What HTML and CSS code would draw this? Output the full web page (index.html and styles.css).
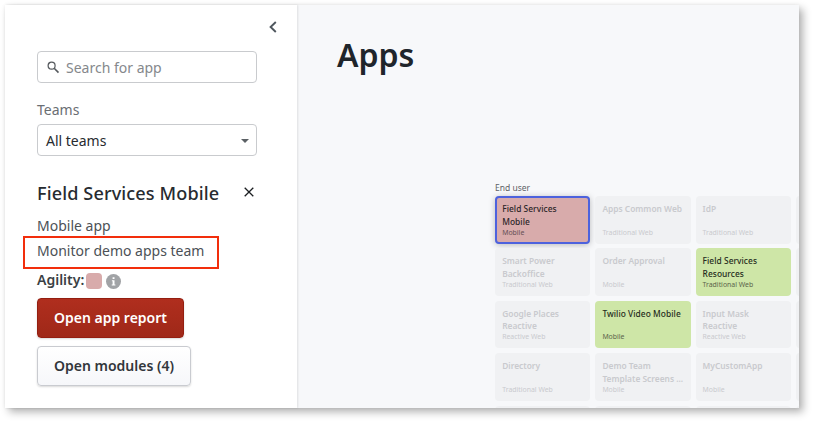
FILE: index.html
```html
<!DOCTYPE html>
<html lang="en">
<head>
<meta charset="utf-8">
<title>Apps</title>
<link rel="stylesheet" href="styles.css">
</head>
<body>
<div class="window">
  <aside class="sidebar">
    <div class="collapse"><svg width="8" height="12" viewBox="0 0 8 12"><path d="M6.8 1 1.6 6l5.2 5" fill="none" stroke="#4f575e" stroke-width="1.9"/></svg></div>
    <div class="field search">
      <svg width="13" height="13" viewBox="0 0 13 13" fill="none" stroke="#55595d"><circle cx="4.6" cy="4.7" r="3.5" stroke-width="1.2"/><path d="m7.2 7.3 4.3 4.3" stroke-width="1.6"/></svg>
      <span>Search for app</span>
    </div>
    <div class="label">Teams</div>
    <div class="field select"><span>All teams</span><svg width="8" height="4" viewBox="0 0 8 4"><path d="M0 0h8L4 4z" fill="#5b6064"/></svg></div>
    <div class="heading"><h2>Field Services Mobile</h2><svg width="10" height="10" viewBox="0 0 10 10"><path d="m.7.7 8.6 8.6M9.3.7.7 9.3" stroke="#1c1f22" stroke-width="1.3"/></svg></div>
    <div class="kind">Mobile app</div>
    <div class="team">Monitor demo apps team</div>
    <div class="agility"><span>Agility:</span><i class="swatch"></i><svg width="15" height="15" viewBox="0 0 15 15"><circle cx="7.5" cy="7.5" r="7.5" fill="#a1a3a6"/><path d="M6.6 3.3h1.9v1.8H6.6zM5.9 6.2h2.6v4.2h.9v1.2H5.7v-1.2h.9V7.3h-.7z" fill="#fff"/></svg></div>
    <button class="button primary">Open app report</button>
    <button class="button">Open modules (4)</button>
  </aside>
  <main class="main">
    <h1>Apps</h1>
    <div class="layer">End user</div>
    <div class="cards">
      <div class="card selected"><b>Field Services<br>Mobile</b><small>Mobile</small></div>
      <div class="card"><b>Apps Common Web</b><small>Traditional Web</small></div>
      <div class="card"><b>IdP</b><small>Traditional Web</small></div>
      <div class="card"></div>
      <div class="card"><b>Smart Power<br>Backoffice</b><small>Traditional Web</small></div>
      <div class="card"><b>Order Approval</b><small>Mobile</small></div>
      <div class="card green"><b>Field Services<br>Resources</b><small>Traditional Web</small></div>
      <div class="card"></div>
      <div class="card"><b>Google Places<br>Reactive</b><small>Reactive Web</small></div>
      <div class="card green"><b>Twilio Video Mobile</b><small>Mobile</small></div>
      <div class="card"><b>Input Mask<br>Reactive</b><small>Reactive Web</small></div>
      <div class="card"></div>
      <div class="card"><b>Directory</b><small>Traditional Web</small></div>
      <div class="card"><b>Demo Team<br>Template Screens ...</b><small>Mobile</small></div>
      <div class="card"><b>MyCustomApp</b><small>Mobile</small></div>
      <div class="card"></div>
      <div class="card"></div>
      <div class="card"></div>
      <div class="card"></div>
      <div class="card"></div>
    </div>
  </main>
</div>
</body>
</html>
```
FILE: styles.css
```css
* { box-sizing: border-box; }
body {
  margin: 0;
  padding: 5px;
  height: 423px;
  overflow: hidden;
  background: #fff;
  font-family: "Noto Sans", sans-serif;
  font-size: 14px;
  color: #272b30;
}
svg { display: block; flex: none; }
.window {
  display: flex;
  width: 794px;
  height: 403px;
  background: #f7f8fa;
  box-shadow: 4px 4px 8px rgba(0, 0, 0, .3), 0 0 4px rgba(0, 0, 0, .06);
}
.sidebar {
  width: 292px;
  flex: none;
  padding: 16px 40px 0 32px;
  background: #fff;
  box-shadow: 1px 0 2px rgba(0, 0, 0, .1);
}
.collapse {
  display: flex;
  justify-content: flex-end;
  height: 30px;
  margin-right: -20px;
}
.field {
  display: flex;
  align-items: center;
  height: 32px;
  border: 1px solid #c9cbce;
  border-radius: 4px;
  background: #fff;
}
.search { padding-left: 9px; gap: 6px; color: #85888c; }
.label { margin-top: 17px; height: 24px; line-height: 20px; color: #6a6e73; }
.select { justify-content: space-between; padding: 0 7px 0 8px; }
.select svg { margin-top: 2px; }
.heading {
  display: flex;
  align-items: center;
  justify-content: space-between;
  height: 26px;
  margin: 24px 3px 0 0;
}
.heading svg { margin-top: -3px; }
h2 { margin: 0; font-size: 18.1px; line-height: 26px; font-weight: 500; letter-spacing: .12px; white-space: nowrap; color: #272b30; }
.kind { margin-top: 10px; height: 20px; line-height: 20px; color: #4c5156; }
.team {
  width: 196px;
  height: 33px;
  margin: 0 0 0 -14px;
  padding-left: 12px;
  border: 2px solid #f22e0c;
  line-height: 25px;
  color: #4c5156;
  white-space: nowrap;
}
.agility { display: flex; align-items: center; height: 20px; margin-top: 2px; font-weight: 600; color: #3b3f44; }
.agility span { width: 49px; margin-top: -4px; }
.swatch { width: 16px; height: 16px; border-radius: 4px; background: #d8abab; margin-right: 4px; }
.button {
  display: block;
  width: 154px;
  height: 40px;
  margin: 8px 0 0;
  padding: 0 0 2px;
  border: 1px solid #c9cbd0;
  border-radius: 4px;
  background: linear-gradient(#fff, #f6f7fa);
  box-shadow: 0 1px 2px rgba(0, 0, 0, .15);
  font: 600 14px "Noto Sans", sans-serif;
  color: #32363b;
}
.primary {
  width: 147px;
  margin-top: 7px;
  border-color: #941e10;
  background: linear-gradient(#b02e1e, #9f2818);
  color: #fff;
}
.main { flex: 1; min-width: 0; overflow: hidden; padding-left: 40px; }
h1 { margin: 26px 0 0; height: 48px; font-size: 32px; line-height: 48px; font-weight: 600; color: #20252b; }
.layer { margin: 102px 0 0 158px; height: 15px; padding-top: 1px; font-size: 8.5px; line-height: 12px; color: #5e6267; }
.cards {
  display: grid;
  grid-template-columns: repeat(4, 95.2px);
  grid-auto-rows: 47.5px;
  gap: 4.9px 5px;
  margin-left: 158.2px;
}
.card {
  display: flex;
  flex-direction: column;
  justify-content: space-between;
  padding: 7px 0 6px 7px;
  border-radius: 4px;
  background: #f0f1f3;
  color: #c9cace;
  white-space: nowrap;
}
.card b { height: 25px; font-size: 8.4px; line-height: 12.7px; font-weight: 600; }
.card small { font-size: 6.9px; line-height: 10px; margin-top: -1px; }
.green { background: #cee6a7; color: #252c20; }
.green small { color: #5b654b; }
.green b, .selected b { font-weight: 500; letter-spacing: .05px; }
.selected {
  padding: 5px 0 4px 5px;
  border: 2px solid #4d62dd;
  background: #d8abab;
  color: #2b2528;
  box-shadow: 0 1px 6px rgba(0, 0, 0, .25);
}
.selected small { color: #665055; }
```
